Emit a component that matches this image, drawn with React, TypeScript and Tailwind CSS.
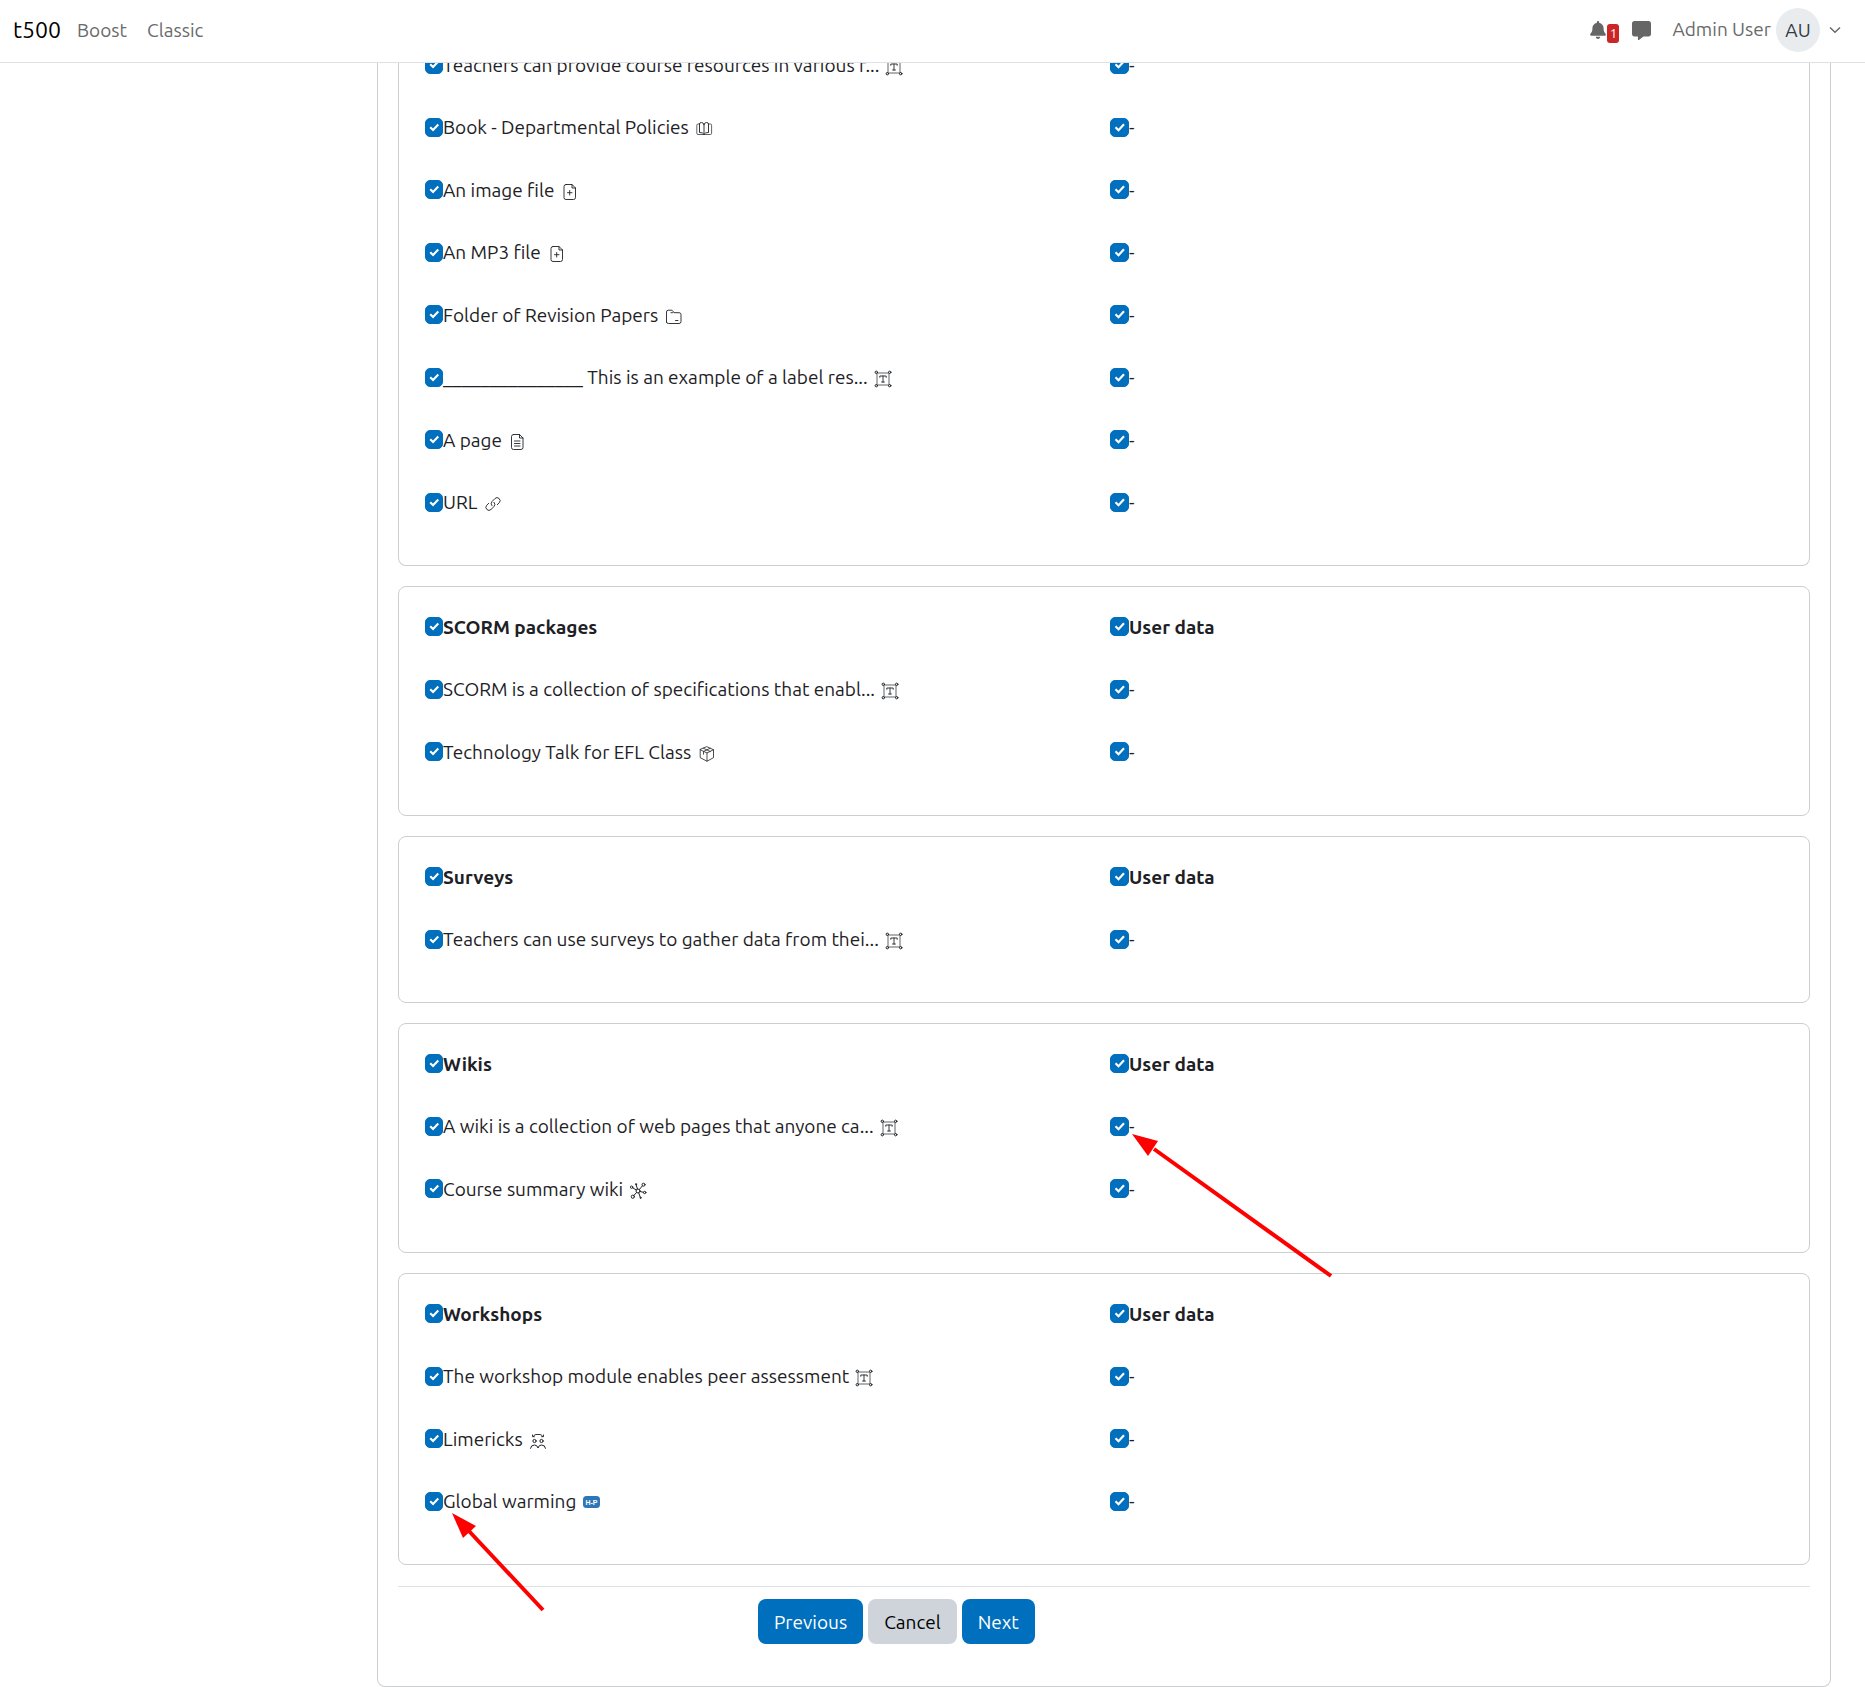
import React, { useId } from 'react';
import { FaBell, FaMessage } from 'react-icons/fa6';

type IconName = 'label' | 'book' | 'file' | 'folder' | 'page' | 'url' | 'scorm' | 'wiki' | 'workshop' | 'h5p';

type Activity = { name: string; icon: IconName; arrow?: 'left' | 'right' };

type SectionData = { title?: string; items: Activity[] };

const sections: SectionData[] = [
  {
    items: [
      { name: 'Teachers can provide course resources in various f...', icon: 'label' },
      { name: 'Book - Departmental Policies', icon: 'book' },
      { name: 'An image file', icon: 'file' },
      { name: 'An MP3 file', icon: 'file' },
      { name: 'Folder of Revision Papers', icon: 'folder' },
      { name: '_______________ This is an example of a label res...', icon: 'label' },
      { name: 'A page', icon: 'page' },
      { name: 'URL', icon: 'url' },
    ],
  },
  {
    title: 'SCORM packages',
    items: [
      { name: 'SCORM is a collection of specifications that enabl...', icon: 'label' },
      { name: 'Technology Talk for EFL Class', icon: 'scorm' },
    ],
  },
  {
    title: 'Surveys',
    items: [{ name: 'Teachers can use surveys to gather data from thei...', icon: 'label' }],
  },
  {
    title: 'Wikis',
    items: [
      { name: 'A wiki is a collection of web pages that anyone ca...', icon: 'label', arrow: 'right' },
      { name: 'Course summary wiki', icon: 'wiki' },
    ],
  },
  {
    title: 'Workshops',
    items: [
      { name: 'The workshop module enables peer assessment', icon: 'label' },
      { name: 'Limericks', icon: 'workshop' },
      { name: 'Global warming', icon: 'h5p', arrow: 'left' },
    ],
  },
];

function ActivityIcon({ name }: { name: IconName }) {
  if (name === 'h5p') {
    return (
      <svg viewBox="0 0 20 20" className="mt-0.5 ml-[5px] size-5 shrink-0" aria-hidden="true">
        <rect x="2" y="4" width="17" height="12" rx="3.5" fill="#2f76b9" />
        <text
          x="10.5"
          y="12.5"
          textAnchor="middle"
          fontSize="7"
          fontWeight="700"
          fill="#ffffff"
          fontFamily="Liberation Sans, sans-serif"
        >
          H-P
        </text>
      </svg>
    );
  }
  return (
    <svg
      viewBox="0 0 20 20"
      className="mt-1 ml-[5px] size-5 shrink-0 text-[#1d2125]"
      fill="none"
      stroke="currentColor"
      strokeWidth="1"
      strokeLinecap="round"
      strokeLinejoin="round"
      aria-hidden="true"
    >
      {name === 'label' && (
        <>
          <circle cx="3.300" cy="3.300" r="1.200" />
          <circle cx="16.700" cy="3.300" r="1.200" />
          <circle cx="3.300" cy="16.700" r="1.200" />
          <circle cx="16.700" cy="16.700" r="1.200" />
          <path d="M4.700 4h10.600M4.700 16h10.600M4 4.700v10.600M16 4.700v10.600" strokeWidth="0.7" />
          <path d="M6.800 8.300V7h6.400v1.300M10 7v6M8.600 13h2.800" strokeWidth="0.9" />
        </>
      )}
      {name === 'book' && (
        <>
          <path
            d="M10 5.500Q9.500 3.500 7.500 3.500 5.500 3.500 5.500 5V13.500Q9 13.300 10 15.500 11 13.300 14.500 13.500V5Q14.500 3.500 12.500 3.500 10.500 3.500 10 5.500zM10 5.500v10"
            strokeWidth="0.9"
          />
          <path d="M5.500 5H4q-1.200 0-1.200 1.200v8.100q0 1.200 1.200 1.200h12.400q1.200 0 1.200-1.200V6.200q0-1.200-1.200-1.200h-1.900" strokeWidth="0.7" />
        </>
      )}
      {name === 'file' && (
        <path d="M7 2.500h6l3.500 3.500v9.500q0 2-2 2H7q-2 0-2-2v-11q0-2 2-2zM13 2.500V6h3.500M10.700 8.500v4.500M8.500 10.700h4.500" strokeWidth="0.9" />
      )}
      {name === 'page' && (
        <path d="M6.500 2.500h6L16 6v9.500q0 2-2 2H6.500q-2 0-2-2v-11q0-2 2-2zM12.500 2.500V6H16M7.500 9H13M7.500 11.500H13M7.500 14H13" strokeWidth="0.9" />
      )}
      {name === 'folder' && (
        <path
          d="M3.500 15V5q0-1.800 1.800-1.800h3q1 0 1.600 1l1 1.500H16q2 0 2 2V14.500q0 2-2 2H5.300Q3.500 16.500 3.500 15zM9.500 5.700h-1.500M12.500 13.500H15"
          strokeWidth="0.9"
        />
      )}
      {name === 'url' && (
        <path
          d="M9 11.800a3 3 0 0 1-.1-4.100l3-3.100a3 3 0 0 1 4.300 4.200l-1.900 1.900M11 8.300a3 3 0 0 1 .1 4.100l-3 3a3 3 0 0 1-4.300-4.200l1.900-1.900"
          strokeWidth="0.9"
        />
      )}
      {name === 'scorm' && (
        <path
          d="M11 2.800 17.500 5.700v8L11 17.200l-6.800-3.500v-8zM4.200 5.700 11 9l6.500-3.300M11 9v8.200M7.500 4.300 14.200 7.500M14.200 4.300 7.500 7.500v2.700"
          strokeWidth="0.8"
        />
      )}
      {name === 'wiki' && (
        <>
          <circle cx="10" cy="10" r="2" />
          <circle cx="3.600" cy="6.200" r="1.200" />
          <circle cx="15.500" cy="3.700" r="1.500" />
          <circle cx="16.700" cy="11.500" r="1.200" />
          <circle cx="4.800" cy="15.700" r="1.600" />
          <circle cx="12.500" cy="16.800" r="0.600" />
          <circle cx="8" cy="3.200" r="0.600" />
          <path d="M4.800 6.900 8.200 8.900M14.400 4.900l-3 3.500M12 10.500l3.500.8M8.500 11.500l-2.600 3M10.800 12l1.400 4.100M8.200 3.900l1.200 4" />
        </>
      )}
      {name === 'workshop' && (
        <>
          <circle cx="6.500" cy="10" r="1.600" />
          <circle cx="13.500" cy="10" r="1.600" />
          <path d="M2.500 17.300Q2.800 14 6.500 14 9.300 14 10 17 10.700 14 13.500 14 17.200 14 17.500 17.300" />
          <path d="M5.500 5.500Q6 3.500 8 3.500h4q2 0 2.500 2M4.500 4v1.700h1.800M15.500 4v1.700h-1.800" strokeWidth="0.9" />
        </>
      )}
    </svg>
  );
}

function Tick({ id, narrow = false }: { id: string; narrow?: boolean }) {
  return (
    <span className={narrow ? 'grid h-[19px] w-[18px] shrink-0' : 'grid h-[19px] w-[19px] shrink-0'}>
      <input
        id={id}
        type="checkbox"
        defaultChecked
        className="peer col-start-1 row-start-1 size-full appearance-none rounded-[5px] border border-[#8f959e] checked:border-[#006fbe] checked:bg-[#006fbe]"
      />
      <svg
        viewBox="0 0 19 19"
        className="pointer-events-none invisible col-start-1 row-start-1 size-full peer-checked:visible"
        fill="none"
        stroke="#ffffff"
        strokeWidth="2.2"
        aria-hidden="true"
      >
        <path d="M5.500 9.300 8.500 12.200 14 6.300" />
      </svg>
    </span>
  );
}

function RightArrow() {
  return (
    <svg viewBox="0 0 200 144" className="pointer-events-none absolute top-[39px] left-[28px] h-36 w-[200px]" aria-hidden="true">
      <path d="M22 15 199 142" stroke="#ff0000" strokeWidth="4" />
      <path d="M0 0 26 7 16 22z" fill="#ff0000" />
    </svg>
  );
}

function LeftArrow() {
  return (
    <svg viewBox="0 0 96 100" className="pointer-events-none absolute top-[43px] left-[33px] h-[100px] w-24" aria-hidden="true">
      <path d="M16 17 91 97" stroke="#ff0000" strokeWidth="4" />
      <path d="M0 0 24 13 11 25z" fill="#ff0000" />
    </svg>
  );
}

function Row({ name, other, icon, bold = false, arrow }: { name: string; other: string; icon?: IconName; bold?: boolean; arrow?: 'left' | 'right' }) {
  const id = useId();
  return (
    <div className={`grid grid-cols-2 odd:h-[63px] even:h-[62px] ${bold ? 'font-bold' : ''}`}>
      <div className="relative flex items-center pl-[6px]">
        <Tick id={id + 'a'} narrow />
        <label htmlFor={id + 'a'}>{name}</label>
        {icon && <ActivityIcon name={icon} />}
        {arrow === 'left' && <LeftArrow />}
      </div>
      <div className="relative flex items-center pl-[6px]">
        <Tick id={id + 'b'} />
        <label htmlFor={id + 'b'}>{other}</label>
        {arrow === 'right' && <RightArrow />}
      </div>
    </div>
  );
}

function Section({ title, items }: SectionData) {
  return (
    <section
      className={
        title
          ? 'rounded-lg border border-[#cccfd1] px-5 pt-2 pb-8'
          : 'rounded-b-lg border border-t-0 border-[#cccfd1] px-5 pt-[33px] pb-8'
      }
    >
      {title && <Row name={title} other="User data" bold />}
      {items.map((item) => (
        <Row key={item.name} name={item.name} icon={item.icon} other="-" arrow={item.arrow} />
      ))}
    </section>
  );
}

function Header() {
  return (
    <header className="fixed inset-x-0 top-0 z-10 flex h-[63px] items-center border-b border-[#dee2e6] bg-white pr-6 pb-0.5 pl-[13px] text-[#6a6a6a]">
      <a href="#home" className="mr-4 text-[23px] text-black">
        t500
      </a>
      <nav className="flex items-center gap-5">
        <a href="#boost">Boost</a>
        <a href="#classic">Classic</a>
      </nav>
      <div className="ml-auto flex items-center">
        <button type="button" aria-label="Notifications" className="flex items-center">
          <FaBell size={18} color="#666666" />
          <span className="mt-1.5 flex h-[19px] w-3 items-center justify-center rounded-[3px] bg-[#cb2526] text-[13px] text-white">
            1
          </span>
        </button>
        <button type="button" aria-label="Messages" className="ml-[13px]">
          <FaMessage size={19} color="#666666" />
        </button>
        <button type="button" className="ml-[21px] flex items-center">
          <span className="pb-0.5">Admin User</span>
          <span className="ml-[5px] flex size-11 items-center justify-center rounded-full bg-[#e9ecef] text-[#343a40]">AU</span>
          <svg viewBox="0 0 12 8" className="ml-[9px] h-2 w-3" fill="none" stroke="#6a6a6a" strokeWidth="1.500" aria-hidden="true">
            <path d="M1 1.500 6 6.300 11 1.500" />
          </svg>
        </button>
      </div>
    </header>
  );
}

export default function App() {
  return (
    <div className="bg-white font-['Ubuntu','Noto_Sans',sans-serif] text-[19px] leading-7 text-[#1d2125]">
      <Header />
      <main className="pr-[34px] pl-[377px]">
        <form className="rounded-b-lg border border-t-0 border-[#cccfd1] px-5 pb-[42px]" onSubmit={(e) => e.preventDefault()}>
          <div className="flex flex-col gap-5">
            {sections.map((section) => (
              <Section key={section.title ?? 'Resources'} {...section} />
            ))}
          </div>
          <hr className="mt-[21px] border-[#dee2e6]" />
          <div className="mt-3 ml-[25%] flex gap-[5px] pl-[7px]">
            <button type="button" className="h-[45px] rounded-lg bg-[#006fbe] px-4 text-white">
              Previous
            </button>
            <button type="button" className="h-[45px] rounded-lg bg-[#ced4da] px-4 text-black">
              Cancel
            </button>
            <button type="submit" className="h-[45px] rounded-lg bg-[#006fbe] px-4 text-white">
              Next
            </button>
          </div>
        </form>
      </main>
    </div>
  );
}
